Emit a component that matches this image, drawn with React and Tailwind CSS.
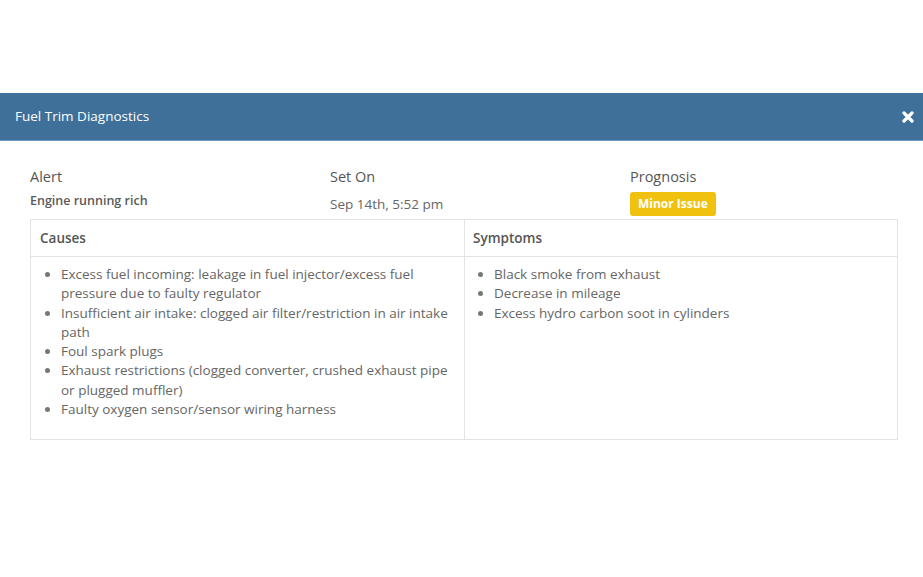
const causes = [
  "Excess fuel incoming: leakage in fuel injector/excess fuel pressure due to faulty regulator",
  "Insufficient air intake: clogged air filter/restriction in air intake path",
  "Foul spark plugs",
  "Exhaust restrictions (clogged converter, crushed exhaust pipe or plugged muffler)",
  "Faulty oxygen sensor/sensor wiring harness",
];

const symptoms = [
  "Black smoke from exhaust",
  "Decrease in mileage",
  "Excess hydro carbon soot in cylinders",
];

const BulletList = ({ items }) => (
  <ul className="list-disc pl-[29px] pr-[12px] text-[13.5px] leading-[19.3px] text-[#666] marker:text-[#777]">
    {items.map((item) => (
      <li key={item}>{item}</li>
    ))}
  </ul>
);

const App = () => {
  return (
    <div
      className="w-[923px] h-[577px] bg-white pt-[93px]"
      style={{ fontFamily: '"Open Sans", sans-serif' }}
    >
      <div className="h-[48px] bg-[#3e7099] border-b border-[#6b98bd] flex items-center justify-between pl-[15px] pr-[9px]">
        <h2 className="text-[13.5px] text-white">Fuel Trim Diagnostics</h2>
        <button className="text-white leading-none">
          <svg width="12" height="12" viewBox="0 0 12 12">
            <path
              d="M2 2 L10 10 M10 2 L2 10"
              stroke="white"
              strokeWidth="3.2"
              strokeLinecap="round"
            />
          </svg>
        </button>
      </div>

      <div className="px-[25px] pt-[26px]">
        <div className="grid grid-cols-[300px_300px_1fr] pl-[5px]">
          <div>
            <p className="text-[14.5px] text-[#555] leading-[20px]">Alert</p>
            <p className="text-[12.5px] font-semibold text-[#5a5a5a] mt-[5px]">
              Engine running rich
            </p>
          </div>
          <div>
            <p className="text-[14.5px] text-[#555] leading-[20px]">Set On</p>
            <p className="text-[13.5px] text-[#666] mt-[7px]">Sep 14th, 5:52 pm</p>
          </div>
          <div>
            <p className="text-[14.5px] text-[#555] leading-[20px]">Prognosis</p>
            <span className="inline-block mt-[5px] bg-[#f0c20f] text-white text-[12px] font-bold px-[8px] py-[3px] rounded-[3px]">
              Minor Issue
            </span>
          </div>
        </div>

        <div className="mt-[3px] ml-[5px] w-[868px] border border-[#e3e3e3] grid grid-cols-[434px_1fr]">
          <div className="border-r border-[#e3e3e3]">
            <div className="h-[37px] border-b border-[#e3e3e3] flex items-center px-[9px] text-[13.5px] font-semibold text-[#555]">
              Causes
            </div>
            <div className="pt-[8px] pb-[20px] px-[1px]">
              <BulletList items={causes} />
            </div>
          </div>
          <div>
            <div className="h-[37px] border-b border-[#e3e3e3] flex items-center px-[8px] text-[13.5px] font-semibold text-[#555]">
              Symptoms
            </div>
            <div className="pt-[8px] px-0">
              <BulletList items={symptoms} />
            </div>
          </div>
        </div>
      </div>
    </div>
  );
};

export default App;
